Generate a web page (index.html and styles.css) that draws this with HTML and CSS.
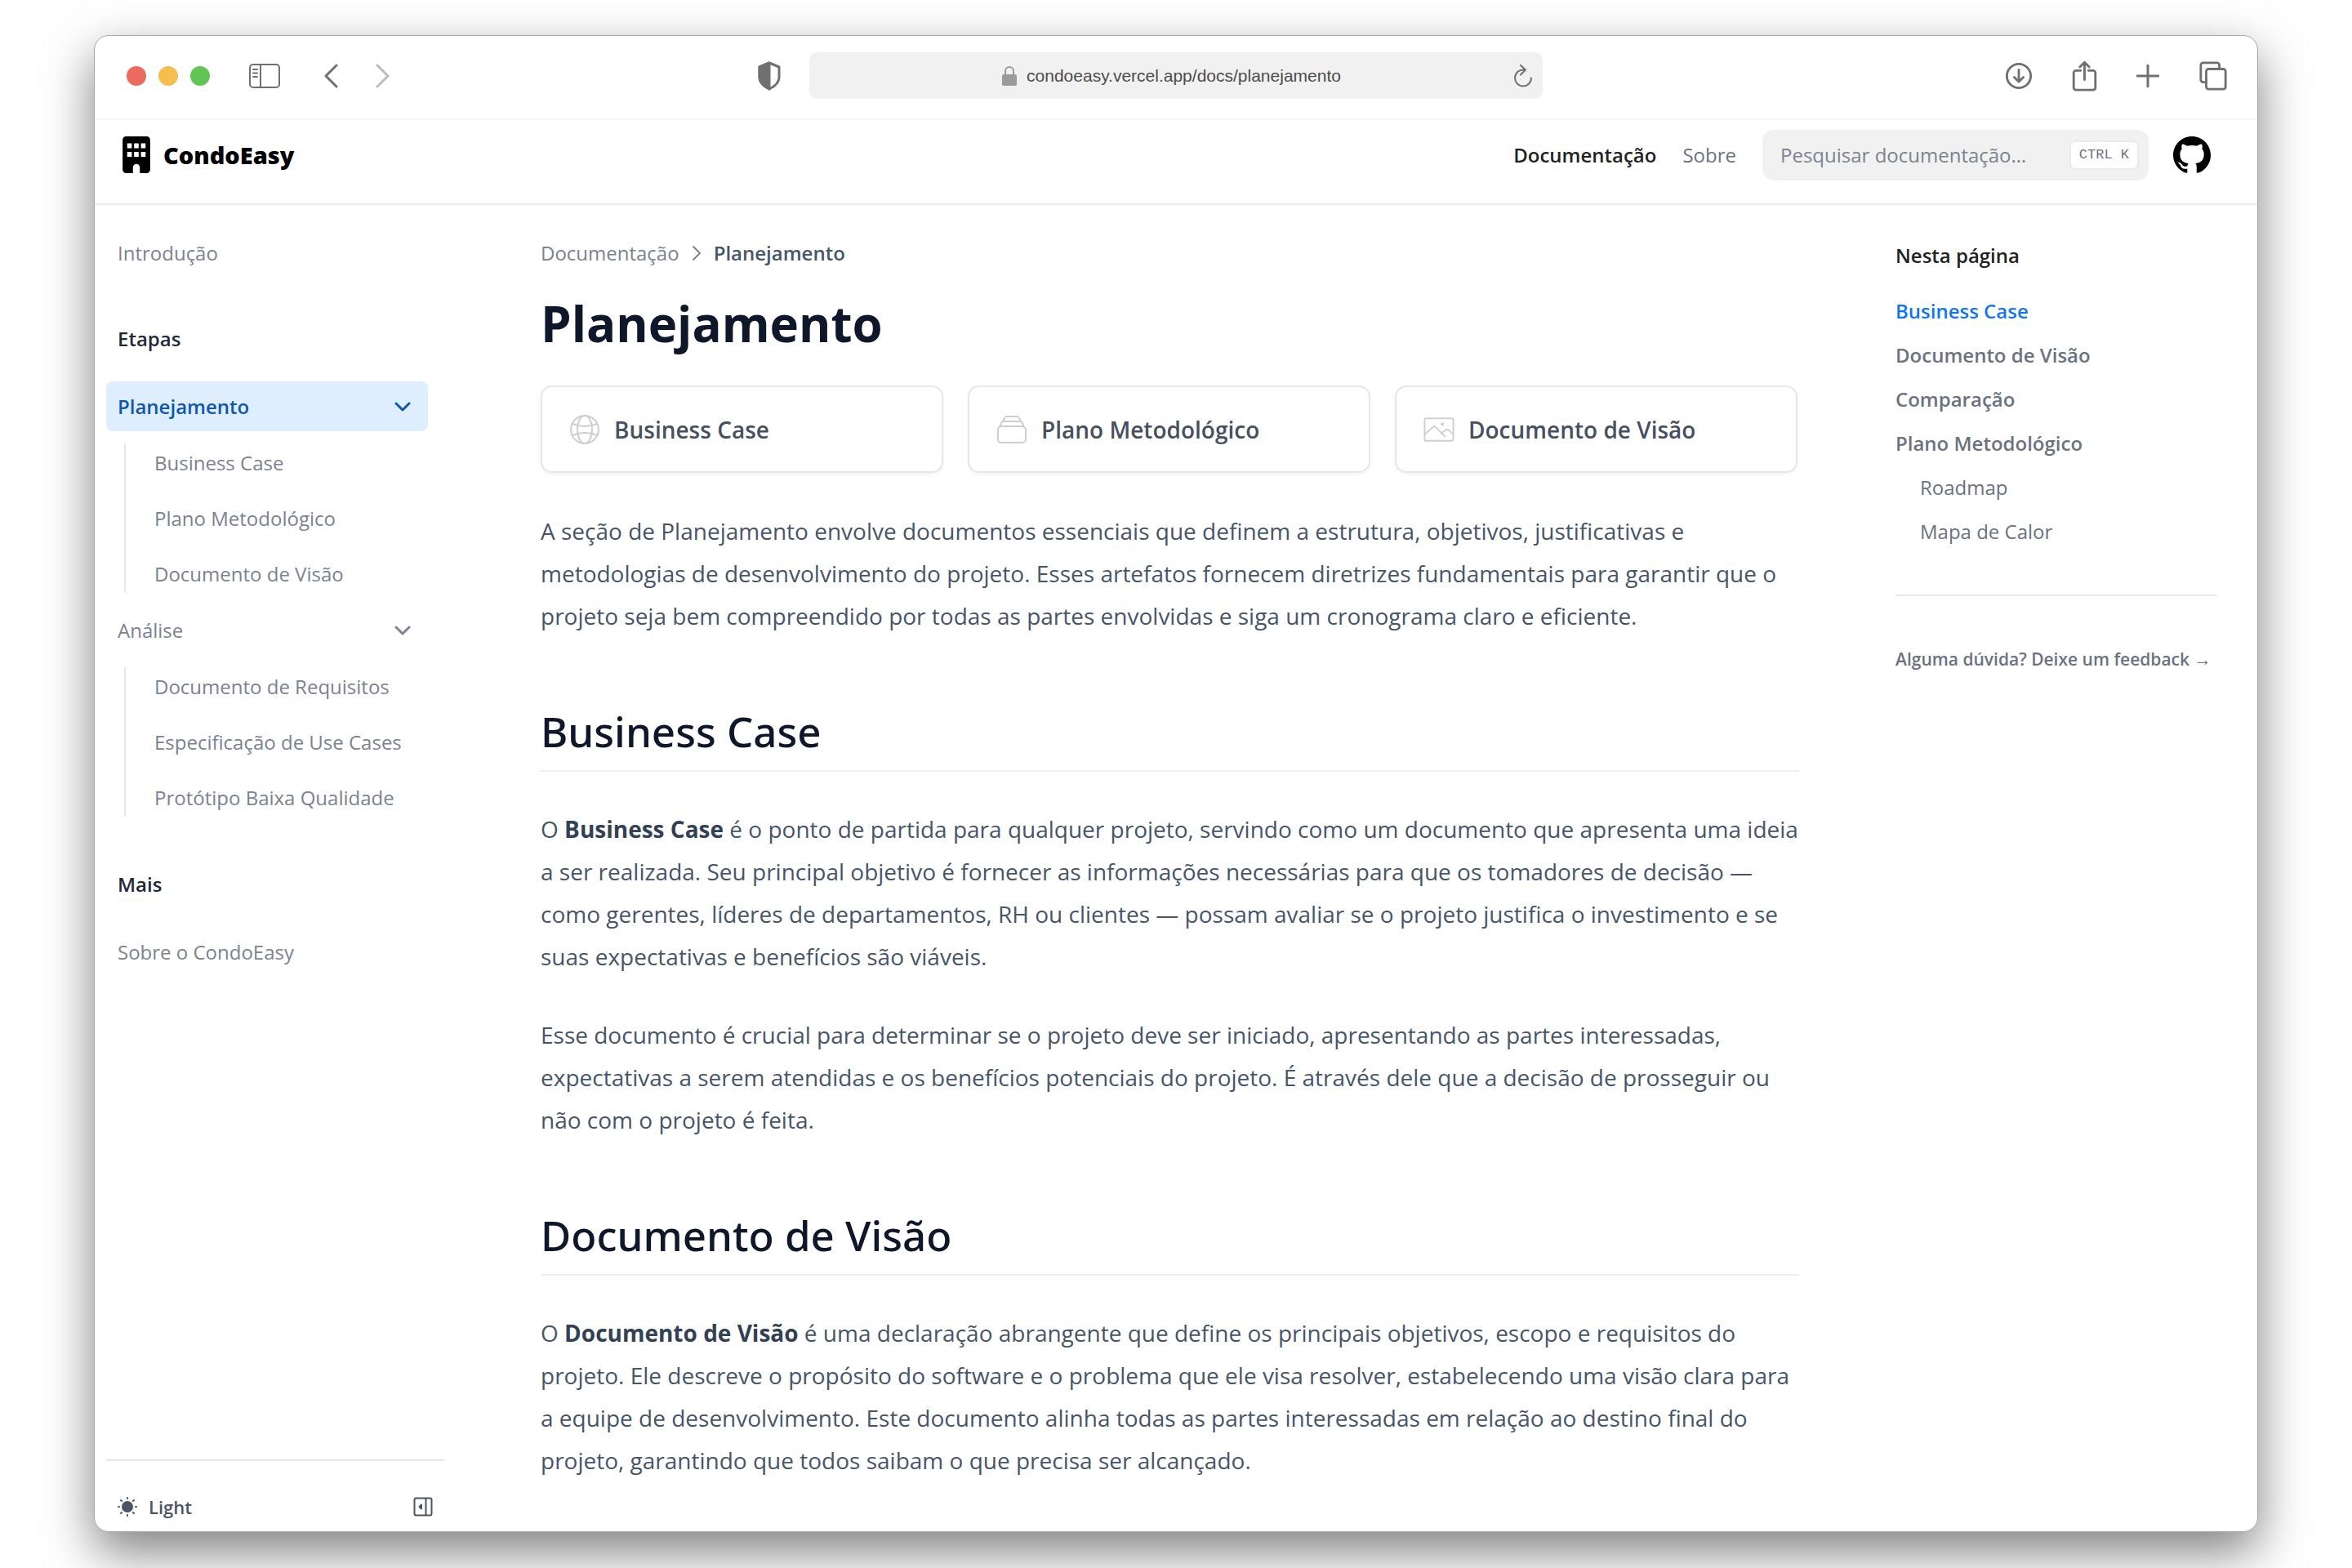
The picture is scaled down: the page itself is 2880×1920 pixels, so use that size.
FILE: index.html
```html
<!DOCTYPE html>
<html lang="pt-BR">
<head>
<meta charset="utf-8">
<title>Planejamento – CondoEasy</title>
<link rel="stylesheet" href="styles.css">
</head>
<body>
<div class="window">
  <div class="toolbar">
    <div class="tools tools-left">
      <span class="lights"><i class="light red"></i><i class="light yellow"></i><i class="light green"></i></span>
      <button class="tool sidebar-tool" aria-label="Barra lateral"><svg width="40" height="32" viewBox="0 0 40 32"><rect x="2" y="2" width="36" height="28" rx="4"/><path d="M15 2v28M6 8h5M6 12.500h5M6 17h5"/></svg></button>
      <button class="tool" aria-label="Voltar"><svg width="18" height="32" viewBox="0 0 18 32"><path d="M16 3L3 16l13 13"/></svg></button>
      <button class="tool forward" aria-label="Avançar"><svg width="18" height="32" viewBox="0 0 18 32"><path d="M2 3l13 13L2 29"/></svg></button>
    </div>
    <div class="address-group">
      <button class="tool" aria-label="Privacidade"><svg width="30" height="36" viewBox="0 0 30 36"><path d="M15 2l12 5v13c0 6-6 11-12 14C9 31 3 26 3 20V7z"/><path class="solid" d="M15 2v32C9 31 3 26 3 20V7z"/></svg></button>
      <div class="address">
        <span class="url"><svg class="lock" width="18" height="26" viewBox="0 0 18 26"><rect x="0" y="11" width="18" height="14" rx="2"/><path d="M4 12V7a5 5 0 0 1 10 0v5"/></svg>condoeasy.vercel.app/docs/planejamento</span>
        <button class="tool reload" aria-label="Recarregar"><svg width="24" height="28" viewBox="0 0 24 28"><path d="M13 6.500A10 10 0 1 0 22 16.500M9 1l6 5.500-6 6"/></svg></button>
      </div>
    </div>
    <div class="tools tools-right">
      <button class="tool" aria-label="Downloads"><svg width="34" height="36" viewBox="0 0 36 38"><circle cx="18" cy="19" r="15.500"/><path d="M18 11v15M12 20.500l6 6 6-6"/></svg></button>
      <button class="tool" aria-label="Compartilhar"><svg width="31" height="38" viewBox="0 0 32 40"><path d="M11 13H5a3 3 0 0 0-3 3v19a3 3 0 0 0 3 3h22a3 3 0 0 0 3-3V16a3 3 0 0 0-3-3h-6M16 25V3M10 8.500l6-6 6 6"/></svg></button>
      <button class="tool" aria-label="Nova aba"><svg width="28" height="28" viewBox="0 0 28 28"><path d="M14 1v26M1 14h26"/></svg></button>
      <button class="tool" aria-label="Abas"><svg width="36" height="36" viewBox="0 0 36 38"><path d="M9 27H5a3 3 0 0 1-3-3V5a3 3 0 0 1 3-3h18a3 3 0 0 1 3 3v4"/><rect x="9" y="10" width="25" height="26" rx="3"/></svg></button>
    </div>
  </div>

  <header class="navbar">
    <a class="brand" href="#"><svg width="34" height="45" viewBox="0 0 384 512"><path fill-rule="evenodd" d="M48 0C22 0 0 22 0 48v416c0 26 22 48 48 48h96v-80c0-26 22-48 48-48s48 22 48 48v80h96c26 0 48-22 48-48V48c0-26-22-48-48-48zM64 96h64v68H64zM160 96h64v68h-64zM256 96h64v68h-64zM64 216h64v68H64zM160 216h64v68h-64zM256 216h64v68h-64z"/></svg>CondoEasy</a>
    <nav class="nav-links">
      <a class="nav-link current" href="#">Documentação</a>
      <a class="nav-link" href="#">Sobre</a>
    </nav>
    <label class="search"><input type="search" aria-label="Pesquisar" placeholder="Pesquisar documentação…"><kbd>CTRL K</kbd></label>
    <a class="github" href="#" aria-label="GitHub"><svg width="46" height="46" viewBox="0 0 16 16"><path d="M8 0C3.580 0 0 3.580 0 8c0 3.540 2.290 6.530 5.470 7.590.4.070.55-.17.55-.38 0-.19-.01-.82-.01-1.490-2.010.37-2.530-.49-2.690-.94-.09-.23-.48-.94-.82-1.130-.28-.15-.68-.52-.01-.53.63-.01 1.080.58 1.230.82.72 1.210 1.870.87 2.330.66.070-.52.28-.87.51-1.070-1.780-.2-3.640-.89-3.640-3.950 0-.87.31-1.590.82-2.150-.08-.2-.36-1.020.08-2.120 0 0 .67-.21 2.200.82.64-.18 1.320-.27 2-.27s1.360.09 2 .27c1.530-1.040 2.200-.82 2.200-.82.44 1.100.16 1.920.08 2.120.51.56.82 1.270.82 2.150 0 3.070-1.870 3.750-3.650 3.950.29.25.54.73.54 1.480 0 1.070-.01 1.930-.01 2.200 0 .21.15.46.55.38A8.010 8.010 0 0 0 16 8c0-4.420-3.580-8-8-8z"/></svg></a>
  </header>

  <div class="page">
    <aside class="sidebar">
      <a class="side-item" href="#">Introdução</a>
      <h4 class="side-title">Etapas</h4>
      <div class="side-group">
        <button class="side-item active">Planejamento<svg class="chev" width="20" height="12" viewBox="0 0 20 12"><path d="M2 2l8 8 8-8"/></svg></button>
        <div class="side-sub">
          <a class="side-item" href="#">Business Case</a>
          <a class="side-item" href="#">Plano Metodológico</a>
          <a class="side-item" href="#">Documento de Visão</a>
        </div>
        <button class="side-item">Análise<svg class="chev" width="20" height="12" viewBox="0 0 20 12"><path d="M2 2l8 8 8-8"/></svg></button>
        <div class="side-sub">
          <a class="side-item" href="#">Documento de Requisitos</a>
          <a class="side-item" href="#">Especificação de Use Cases</a>
          <a class="side-item" href="#">Protótipo Baixa Qualidade</a>
        </div>
      </div>
      <h4 class="side-title">Mais</h4>
      <a class="side-item" href="#">Sobre o CondoEasy</a>
      <div class="side-footer">
        <button class="theme"><svg width="24" height="24" viewBox="0 0 24 24"><circle cx="12" cy="12" r="6"/><path d="M12 1v1M12 22v1M1 12h1M22 12h1M4 4l1 1M19 19l1 1M4 20l1-1M19 5l1-1"/></svg>Light</button>
        <button class="collapse" aria-label="Recolher"><svg width="24" height="24" viewBox="0 0 24 24"><rect x="1.500" y="1.500" width="21" height="21" rx="2"/><path d="M15.500 2v20"/><path class="solid" d="M10 9.500v5L7.500 12z"/></svg></button>
      </div>
    </aside>

    <main class="article">
      <nav class="crumbs"><a href="#">Documentação</a><svg width="12" height="20" viewBox="0 0 12 20"><path d="M2 2l8 8-8 8"/></svg><span>Planejamento</span></nav>
      <h1>Planejamento</h1>
      <div class="cards">
        <a class="card" href="#"><svg width="38" height="38" viewBox="0 0 38 38"><circle cx="19" cy="19" r="17"/><ellipse cx="19" cy="19" rx="9" ry="17"/><path d="M4 12q15 6 30 0M4 26q15-6 30 0"/></svg>Business Case</a>
        <a class="card" href="#"><svg width="38" height="38" viewBox="0 0 38 38"><rect x="2" y="15" width="34" height="20" rx="4"/><path d="M4 16l2-5a4 4 0 0 1 3-2h20a4 4 0 0 1 3 2l2 5M8 9l2-4a3 3 0 0 1 3-2h12a3 3 0 0 1 3 2l2 4"/></svg>Plano Metodológico</a>
        <a class="card" href="#"><svg width="38" height="32" viewBox="0 0 40 32"><rect x="1.500" y="1.500" width="37" height="29" rx="2"/><path d="M2 22l10-9q2-2 4 0l12 12M23 21l5-4q3-2 5 0l5 5"/><circle cx="24.500" cy="9" r="1.200"/></svg>Documento de Visão</a>
      </div>
      <p>A seção de Planejamento envolve documentos essenciais que definem a estrutura, objetivos, justificativas e metodologias de desenvolvimento do projeto. Esses artefatos fornecem diretrizes fundamentais para garantir que o projeto seja bem compreendido por todas as partes envolvidas e siga um cronograma claro e eficiente.</p>
      <h2>Business Case</h2>
      <p>O <strong>Business Case</strong> é o ponto de partida para qualquer projeto, servindo como um documento que apresenta uma ideia a ser realizada. Seu principal objetivo é fornecer as informações necessárias para que os tomadores de decisão — como gerentes, líderes de departamentos, RH ou clientes — possam avaliar se o projeto justifica o investimento e se suas expectativas e benefícios são viáveis.</p>
      <p>Esse documento é crucial para determinar se o projeto deve ser iniciado, apresentando as partes interessadas, expectativas a serem atendidas e os benefícios potenciais do projeto. É através dele que a decisão de prosseguir ou não com o projeto é feita.</p>
      <h2>Documento de Visão</h2>
      <p>O <strong>Documento de Visão</strong> é uma declaração abrangente que define os principais objetivos, escopo e requisitos do projeto. Ele descreve o propósito do software e o problema que ele visa resolver, estabelecendo uma visão clara para a equipe de desenvolvimento. Este documento alinha todas as partes interessadas em relação ao destino final do projeto, garantindo que todos saibam o que precisa ser alcançado.</p>
    </main>

    <aside class="toc">
      <h4>Nesta página</h4>
      <a class="current" href="#">Business Case</a>
      <a href="#">Documento de Visão</a>
      <a href="#">Comparação</a>
      <a href="#">Plano Metodológico</a>
      <a class="nested" href="#">Roadmap</a>
      <a class="nested" href="#">Mapa de Calor</a>
      <div class="toc-footer"><a href="#">Alguma dúvida? Deixe um feedback →</a></div>
    </aside>
  </div>
</div>
</body>
</html>
```
FILE: styles.css
```css
* { box-sizing: border-box; }

body {
  margin: 0;
  padding: 43px 115px 44px;
  min-height: 100vh;
  display: flex;
  background: #fff;
  font-family: "Open Sans", "Noto Sans", sans-serif;
  font-size: 28px;
  color: #475569;
}

a { color: inherit; text-decoration: none; }
button { margin: 0; padding: 0; border: 0; background: none; font: inherit; color: inherit; }
svg { display: block; flex: none; fill: none; stroke: currentColor; stroke-width: 3; stroke-linecap: round; stroke-linejoin: round; }
h1, h2, h4, p { margin: 0; }

.window {
  flex: 1;
  min-width: 0;
  display: flex;
  flex-direction: column;
  border: 1px solid #a6a6a6;
  border-radius: 18px;
  background: #fff;
  box-shadow: 0 24px 60px rgba(0, 0, 0, .5);
}

/* Browser toolbar */
.toolbar {
  height: 103px;
  padding: 0 36px 4px 39px;
  display: grid;
  grid-template-columns: 1fr auto 1fr;
  align-items: center;
  border-bottom: 2px solid #f7f7f7;
  color: #707070;
}
.tools { display: flex; align-items: center; }
.lights { display: flex; gap: 15px; margin-right: 47px; }
.light { width: 24px; height: 24px; border-radius: 50%; }
.red { background: #ed6a5e; }
.yellow { background: #f5bf4f; }
.green { background: #61c554; }
.sidebar-tool { margin-right: 52px; }
.sidebar-tool svg { stroke-width: 2; }
.forward { margin-left: 46px; color: #bdbdbd; }
.address-group { display: flex; align-items: center; gap: 34px; margin-right: 68px; }
.solid { fill: currentColor; }
.address {
  width: 898px;
  height: 57px;
  padding: 0 12px 0 26px;
  display: flex;
  align-items: center;
  border-radius: 10px;
  background: #f1f1f1;
}
.url {
  flex: 1;
  display: flex;
  justify-content: center;
  align-items: center;
  gap: 12px;
  font-family: "Liberation Sans", sans-serif;
  font-size: 21px;
  color: #4c4c4c;
}
.lock { color: #9b9b9b; stroke-width: 2; }
.lock rect { fill: currentColor; stroke: none; }
.reload svg { stroke-width: 2; }
.tools-right { justify-content: flex-end; gap: 48px; }

/* Site header */
.navbar {
  height: 104px;
  padding: 0 57px 17px 34px;
  display: flex;
  align-items: center;
  border-bottom: 2px solid #ececec;
}
.brand { display: flex; align-items: center; gap: 16px; margin-right: auto; font-size: 29px; font-weight: 800; color: #000; }
.brand svg, .github svg { fill: currentColor; stroke: none; }
.nav-links { display: flex; gap: 32px; font-size: 24px; color: #6b7280; }
.nav-link.current { font-weight: 600; color: #222; }
.search {
  width: 473px;
  height: 62px;
  margin: 0 30px 0 32px;
  padding: 0 12px 0 22px;
  display: flex;
  align-items: center;
  border-radius: 14px;
  background: #f1f1f1;
}
.search input { flex: 1; min-width: 0; padding: 0; border: 0; outline: 0; background: none; font: inherit; font-size: 24px; }
.search input::placeholder { color: #7b8290; opacity: 1; }
.search kbd {
  padding: 0 10px;
  line-height: 32px;
  border: 2px solid #e8eaee;
  border-radius: 7px;
  background: #fff;
  font-family: "Liberation Mono", monospace;
  font-size: 17px;
  color: #6b7280;
}
.github { color: #000; }

/* Page body */
.page {
  flex: 1;
  display: grid;
  grid-template-columns: 414px minmax(0, 1fr) 394px;
  column-gap: 118px;
  padding: 0 49px 0 14px;
}

.sidebar { display: flex; flex-direction: column; padding-top: 28px; font-size: 24px; color: #7b8290; }
.side-item {
  width: 394px;
  height: 61px;
  padding: 0 21px 0 14px;
  display: flex;
  align-items: center;
  justify-content: space-between;
  border-radius: 8px;
  white-space: nowrap;
}
.side-item.active { background: #dfeeff; color: #0d57ae; font-weight: 600; }
.side-title { height: 61px; margin: 44px 0 22px; padding-left: 14px; line-height: 61px; font-size: 24px; font-weight: 600; color: #1f2937; }
.side-group { display: grid; }
.side-sub { display: grid; gap: 21px; margin: 15px 0 15px 22px; padding-left: 21px; border-left: 2px solid #e5e7eb; }
.side-sub:last-child { margin-bottom: 8px; }
.side-sub .side-item { width: 350px; height: 47px; }
.side-footer {
  margin-top: auto;
  height: 88px;
  padding: 40px 14px 0;
  display: flex;
  justify-content: space-between;
  align-items: flex-start;
  border-top: 2px solid #e5e7eb;
  font-size: 22px;
  line-height: 32px;
  font-weight: 600;
  color: #4b5563;
}
.side-footer svg { stroke-width: 2; }
.theme { display: flex; align-items: center; gap: 14px; }
.theme circle { fill: currentColor; }
.collapse { padding-top: 4px; }

.article { padding: 39px 0 40px; }
.crumbs { display: flex; align-items: center; gap: 15px; line-height: 40px; font-size: 24px; color: #7b8290; }
.crumbs svg { stroke-width: 2; }
.crumbs span { font-weight: 600; color: #475569; }
h1 { margin: 23px 0 31px; line-height: 86px; padding-bottom: 2px; font-size: 60px; font-weight: 700; color: #0f172a; }
.cards { display: grid; grid-template-columns: repeat(3, 1fr); gap: 30px; margin: 0 2px 45px 0; }
.card {
  height: 107px;
  padding: 0 33px;
  display: flex;
  align-items: center;
  gap: 17px;
  border: 2px solid #e5e7eb;
  border-radius: 14px;
  box-shadow: 0 2px 4px #f3f4f6;
  font-weight: 600;
  color: #475061;
  white-space: nowrap;
}
.card svg { color: #cfcfcf; stroke-width: 2; }
p { line-height: 52px; }
p + p { margin-top: 44px; }
strong { font-weight: 700; color: #334155; }
h2 {
  margin: 79px 0 44px;
  padding-bottom: 12px;
  line-height: 72px;
  border-bottom: 2px solid #ededed;
  font-family: "Noto Sans", "Open Sans", sans-serif;
  font-size: 51px;
  font-weight: 500;
  color: #0f172a;
}

.toc { display: flex; flex-direction: column; padding-top: 42px; font-size: 24px; line-height: 54px; font-weight: 600; color: #6b7280; white-space: nowrap; }
.toc h4 { margin-bottom: 21px; line-height: 40px; font-size: 24px; font-weight: 600; color: #222; }
.toc .current { color: #1275f0; }
.toc .nested { padding-left: 30px; font-weight: 400; }
.toc-footer { margin-top: 50px; padding-top: 50px; border-top: 2px solid #e8e8e8; font-size: 21px; }
```
